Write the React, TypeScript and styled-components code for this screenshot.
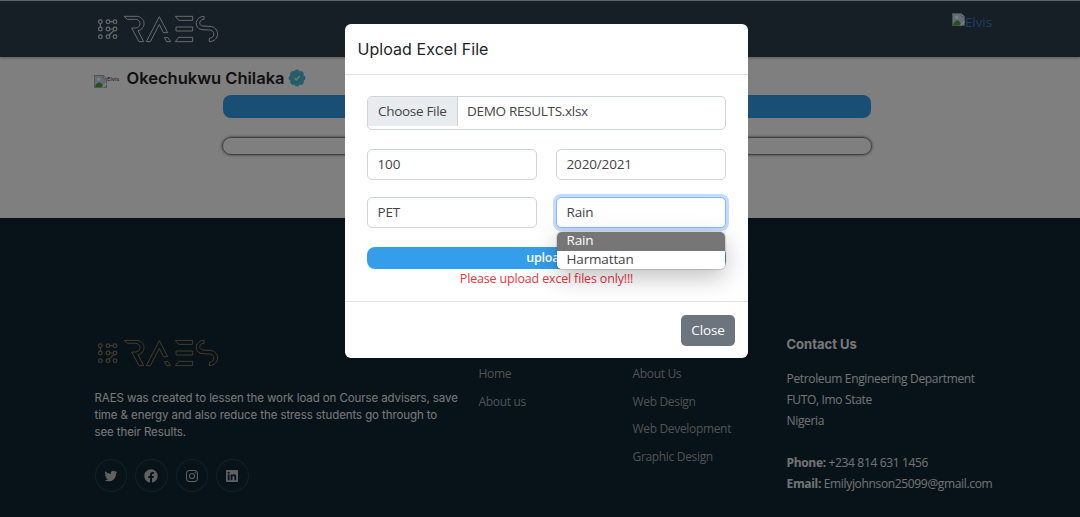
import React from "react";
import styled, { createGlobalStyle, css } from "styled-components";
import {
  BiLogoTwitter,
  BiLogoFacebookCircle,
  BiLogoInstagram,
  BiLogoLinkedinSquare,
} from "react-icons/bi";

const GlobalStyle = createGlobalStyle`
  *, *::before, *::after { box-sizing: border-box; }
  html, body { margin: 0; height: 517px; overflow: hidden; }
  body { font-family: "Open Sans", sans-serif; color: #444; background: #fff; }
  p, h1, h2, h3, h4, ul { margin: 0; padding: 0; }
`;

const inter = css`
  font-family: Inter, sans-serif;
`;

const Page = styled.div`
  position: relative;
  height: 517px;
  display: flex;
  flex-direction: column;
  overflow: hidden;
`;

const TopBar = styled.header`
  display: flex;
  justify-content: space-between;
  align-items: flex-start;
  flex: 0 0 57px;
  padding: 14px 88px 0 96px;
  background: #2a3f4b;
  border-top: 1px solid #b9cbd4;
  box-shadow: 0 1px 3px rgba(0, 0, 0, 0.3);
  z-index: 1;
`;

const AvatarLink = styled.a`
  display: flex;
  align-items: flex-start;
  margin-top: -2px;
  font-size: 13.3px;
  line-height: 19px;
  color: #4878cc;
`;

const Main = styled.main`
  flex: 0 0 161px;
  padding: 11px 94px 0;
`;

const Identity = styled.div`
  display: flex;
  align-items: center;
  height: 20px;
`;

const TinyImage = styled.span`
  display: flex;
  width: 29px;
  padding-top: 7px;
`;

const TinyAlt = styled.span`
  font-size: 6px;
  line-height: 8px;
  color: #222;
`;

const Name = styled.h1`
  ${inter}
  font-size: 16.5px;
  font-weight: 600;
  line-height: 20px;
  margin: 0 3px 0 3.5px;
  color: #222;
  white-space: nowrap;
`;

const BlueBar = styled.div`
  width: 648px;
  height: 23px;
  margin: 7px auto 0 128.5px;
  border-radius: 8px;
  background: #349eea;
`;

const OutlineBar = styled.div`
  width: 650px;
  height: 18px;
  margin: 19px auto 0 127.5px;
  border: 1px solid #808080;
  border-radius: 9px;
  box-shadow: 0 0 3px #666;
`;

const Footer = styled.footer`
  flex: 1;
  display: grid;
  grid-template-columns: 384px 154px 154px 1fr;
  padding: 118px 0 0 94.5px;
  background: #0e2433;
  color: #fff;
`;

const Column = styled.section<{ $top?: number }>`
  padding-top: ${(p) => p.$top ?? 0}px;
`;

const FooterLogo = styled.div`
  padding-left: 1.5px;
`;

const About = styled.p`
  ${inter}
  margin-top: 23px;
  font-size: 11.5px;
  letter-spacing: -0.09px;
  line-height: 17px;
  white-space: nowrap;
  color: #f0f0f0;
`;

const Socials = styled.div`
  display: flex;
  gap: 8px;
  margin-top: 18px;
`;

const Social = styled.a`
  display: grid;
  place-items: center;
  width: 32.5px;
  height: 33px;
  border: 1px solid #26404f;
  border-radius: 50%;
  font-size: 16px;
  color: #c0c0c0;
`;

const Links = styled.ul`
  list-style: none;
  font-size: 12px;
  letter-spacing: -0.33px;
  line-height: 27.5px;
  color: #a0a4a7;
`;

const ContactTitle = styled.h4`
  ${inter}
  font-size: 13px;
  line-height: 16px;
  font-weight: 700;
  margin-bottom: 16px;
  color: #f0f0f0;
`;

const Contact = styled.p`
  font-size: 12px;
  letter-spacing: -0.34px;
  line-height: 21px;
  white-space: nowrap;
  color: #e6e6e6;
`;

const Backdrop = styled.div`
  position: absolute;
  inset: 0;
  z-index: 5;
  background: rgba(0, 0, 0, 0.5);
`;

const Dialog = styled.div`
  position: absolute;
  z-index: 6;
  top: 24px;
  left: 345px;
  width: 403px;
  height: 334px;
  display: flex;
  flex-direction: column;
  border-radius: 6px;
  background: #fff;
`;

const DialogHeader = styled.div`
  flex: 0 0 51px;
  padding: 0 12.5px;
  border-bottom: 1px solid #dee2e6;
`;

const DialogTitle = styled.h2`
  ${inter}
  font-size: 16px;
  font-weight: 400;
  line-height: 50px;
  letter-spacing: 0.06px;
  color: #212529;
`;

const DialogBody = styled.div`
  flex: 0 0 226px;
  padding: 21px 22px 0;
`;

const field = css`
  border: 1px solid #ced4da;
  border-radius: 5px;
  background: #fff;
  font-size: 13.5px;
  letter-spacing: -0.3px;
  color: #444;
`;

const FileField = styled.div`
  ${field}
  display: flex;
  align-items: flex-start;
  height: 34px;
  line-height: 29px;
  overflow: hidden;
`;

const FileButton = styled.span`
  width: 90px;
  height: 29px;
  padding-left: 10px;
  margin-right: 9px;
  background: #e9ecef;
  border-right: 1px solid #ced4da;
`;

const Fields = styled.div`
  display: grid;
  grid-template-columns: 170px 170px;
  justify-content: space-between;
  row-gap: 17px;
  margin-top: 19px;
`;

const Field = styled.div<{ $focus?: boolean }>`
  ${field}
  height: 31px;
  padding-left: 9.5px;
  line-height: 29px;
  position: relative;
  letter-spacing: -0.15px;
  ${(p) =>
    p.$focus &&
    css`
      border-color: #86b7fe;
      box-shadow: 0 0 0 3px #c2dbfe;
    `}
`;

const Menu = styled.div`
  position: absolute;
  top: 34px;
  left: 0;
  width: 168px;
  z-index: 2;
  overflow: hidden;
  border-radius: 5px;
  background: #fff;
  box-shadow: 0 0 1px 1px rgba(0, 0, 0, 0.15), 0 8px 24px rgba(0, 0, 0, 0.25);
`;

const Option = styled.div<{ $active?: boolean }>`
  height: 18.5px;
  padding-left: 9.5px;
  line-height: 17.5px;
  color: ${(p) => (p.$active ? "#fff" : "#444")};
  background: ${(p) => (p.$active ? "#767676" : "#fff")};
`;

const UploadButton = styled.div`
  height: 22.5px;
  margin-top: 18.5px;
  border-radius: 8px;
  background: #349eea;
  color: #fff;
  font-size: 12.5px;
  font-weight: 600;
  letter-spacing: -0.25px;
  line-height: 22.5px;
  text-align: center;
`;

const Warning = styled.p`
  font-size: 12.5px;
  letter-spacing: -0.17px;
  line-height: 20px;
  text-align: center;
  color: #e9363f;
`;

const DialogFooter = styled.div`
  flex: 1;
  display: flex;
  justify-content: flex-end;
  padding: 13px 13px 0;
  border-top: 1px solid #dee2e6;
`;

const CloseButton = styled.div`
  width: 54px;
  height: 31px;
  border-radius: 5px;
  background: #6c757d;
  color: #fff;
  font-size: 13.5px;
  letter-spacing: -0.15px;
  line-height: 30px;
  text-align: center;
`;

const LogoSvg = styled.svg`
  display: block;
`;

const Logo = ({ color }: { color: string }) => (
  <LogoSvg width="124" height="28" viewBox="48 45 372 84" fill="none" stroke={color} strokeWidth="3">
    {[65, 87, 110].map((y) =>
      [61, 84, 105].map((x) => <circle key={`${x}-${y}`} cx={x} cy={y} r="5.5" strokeWidth="3.6" />)
    )}
    <path d="M90 65H99M61 71V81M90 87H99M101 92L88 105" strokeWidth="3.6" />
    <path d="M132 49H168C198 49 200 87 174 92L191 125H177L155 84H166C185 84 184 58 166 58H142Z" />
    <path d="M199 125L238 50L263 98H250L238 73L211 125Z" />
    <path d="M253 113H264L272 125H260Z" />
    <path d="M286 49H338V61H296Z M288 81H338V93H288Z M296 112H338V125H286Z" />
    <path d="M372 49V58C358 57 354 76 368 78L390 79C421 81 420 124 388 125V115C406 113 406 91 388 90L366 89C341 86 343 50 372 49Z" />
  </LogoSvg>
);

const BrokenSvg = styled.svg`
  flex: none;
`;

const BrokenImage = ({ size }: { size: number }) => (
  <BrokenSvg width={size} height={size} viewBox="0 0 14 14">
    <path d="M.5.5H10L13.5 4V13.5H.5Z" fill="#c7d8f4" stroke="#a0a0a0" />
    <path d="M10 .5V4H13.5Z" fill="#fff" stroke="#a0a0a0" />
    <circle cx="5" cy="4.5" r="1.7" fill="#fff" />
    <path d="M1 13C2 9 4 8 6 8S9 10 10 13Z" fill="#4fa53a" />
    <path d="M8 13.5L13.5 8V10L10 13.5Z" fill="#fff" />
  </BrokenSvg>
);

const VerifiedBadge = () => (
  <svg width="18" height="18" viewBox="-9 -9 18 18">
    <g fill="#4bbdd0">
      <circle r="6.8" />
      {[0, 45, 90, 135, 180, 225, 270, 315].map((a) => (
        <circle key={a} r="2.7" cx="5.7" transform={`rotate(${a})`} />
      ))}
    </g>
    <path d="M-2.5 .2L-.8 1.8L2.7 -1.7" fill="none" stroke="#d5eef2" strokeWidth="1.3" />
  </svg>
);

export default function App() {
  return (
    <Page>
      <GlobalStyle />
      <TopBar>
        <Logo color="#cfd8dc" />
        <AvatarLink>
          <BrokenImage size={13} />
          Elvis
        </AvatarLink>
      </TopBar>
      <Main>
        <Identity>
          <TinyImage>
            <BrokenImage size={13} />
            <TinyAlt>Elvis</TinyAlt>
          </TinyImage>
          <Name>Okechukwu Chilaka</Name>
          <VerifiedBadge />
        </Identity>
        <BlueBar />
        <OutlineBar />
      </Main>
      <Footer>
        <Column $top={3}>
          <FooterLogo>
            <Logo color="#8a7a52" />
          </FooterLogo>
          <About>
            RAES was created to lessen the work load on Course advisers, save
            <br />
            time &amp; energy and also reduce the stress students go through to
            <br />
            see their Results.
          </About>
          <Socials>
            <Social><BiLogoTwitter /></Social>
            <Social><BiLogoFacebookCircle /></Social>
            <Social><BiLogoInstagram /></Social>
            <Social><BiLogoLinkedinSquare /></Social>
          </Socials>
        </Column>
        <Column $top={24}>
          <Links>
            <li>Home</li>
            <li>About us</li>
          </Links>
        </Column>
        <Column $top={24}>
          <Links>
            <li>About Us</li>
            <li>Web Design</li>
            <li>Web Development</li>
            <li>Graphic Design</li>
          </Links>
        </Column>
        <Column>
          <ContactTitle>Contact Us</ContactTitle>
          <Contact>
            Petroleum Engineering Department
            <br />
            FUTO, Imo State
            <br />
            Nigeria
            <br />
            <br />
            <strong>Phone:</strong> +234 814 631 1456
            <br />
            <strong>Email:</strong> Emilyjohnson25099@gmail.com
          </Contact>
        </Column>
      </Footer>
      <Backdrop />
      <Dialog>
        <DialogHeader>
          <DialogTitle>Upload Excel File</DialogTitle>
        </DialogHeader>
        <DialogBody>
          <FileField>
            <FileButton>Choose File</FileButton>
            DEMO RESULTS.xlsx
          </FileField>
          <Fields>
            <Field>100</Field>
            <Field>2020/2021</Field>
            <Field>PET</Field>
            <Field $focus>
              Rain
              <Menu>
                <Option $active>Rain</Option>
                <Option>Harmattan</Option>
              </Menu>
            </Field>
          </Fields>
          <UploadButton>upload</UploadButton>
          <Warning>Please upload excel files only!!!</Warning>
        </DialogBody>
        <DialogFooter>
          <CloseButton>Close</CloseButton>
        </DialogFooter>
      </Dialog>
    </Page>
  );
}
